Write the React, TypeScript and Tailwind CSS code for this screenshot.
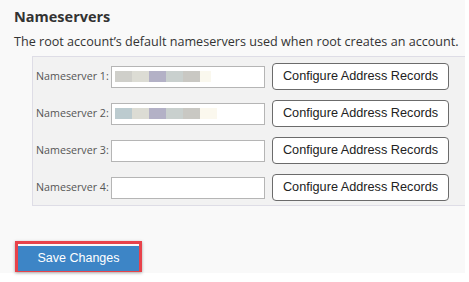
import React from 'react'

const blur1 = ['#cfcfca', '#dcdcd4', '#b3b1c6', '#c9d0ce', '#c9c8c3', '#faf8ee']
const blur2 = ['#bccbcf', '#dcdcd4', '#b3b1c6', '#c9d0ce', '#c9c8c3', '#fbf8ee']

const Row = ({ n, blur, last }: { n: number; blur?: string[]; last?: number }) => {
    return (
        <div className='flex items-center h-[27px]'>
            <div className='w-[75px] text-[10.7px] text-[#555] whitespace-nowrap'>Nameserver {n}:</div>
            <div className='w-[154px] h-[22px] bg-white border border-[#b5b5b5] flex items-center px-[3px]'>
                {blur && (
                    <div className='flex h-[11px]'>
                        {blur.map((c, i) => (
                            <div key={i} className='h-full' style={{ background: c, width: i === blur.length - 1 ? last : 17 }} />
                        ))}
                    </div>
                )}
            </div>
            <button className='ml-[7px] w-[177px] h-[27px] bg-white border border-[#6b6b6b] rounded-[4px] text-[12.7px] text-[#222] font-["Liberation_Sans",Arial,sans-serif]'>
                Configure Address Records
            </button>
        </div>
    )
}

const App = () => {
    return (
        <div className='w-[469px] h-[282px] bg-white font-["Open_Sans",sans-serif] text-[#333]'>
            <div className='w-[465px] h-[273px] bg-[#f9f9f9] pl-[14px] pt-[7px]'>
                <div className='text-[14.5px] font-bold leading-[20px]'>Nameservers</div>
                <div className='text-[12.6px] leading-[18px] mt-[6px] whitespace-nowrap'>
                    The root account’s default nameservers used when root creates an account.
                </div>
                <div className='ml-[18px] mt-[5px] w-[433px] bg-[#f2f2f2] border border-[#dedde6] border-r-0 pl-[3px] pt-[6px] pb-[4px] flex flex-col gap-[10px]'>
                    <Row n={1} blur={blur1} last={11} />
                    <Row n={2} blur={blur2} last={17} />
                    <Row n={3} />
                    <Row n={4} />
                </div>
                <div className='mt-[35px] ml-[1px] w-[127px] h-[31px] border-[3px] border-[#e8424a] shadow-[0_1px_3px_rgba(0,0,0,0.35)]'>
                    <button className='w-full h-full bg-[#3d85c6] text-white text-[12.5px] font-["Liberation_Sans",Arial,sans-serif]'>
                        Save Changes
                    </button>
                </div>
            </div>
        </div>
    )
}

export default App
